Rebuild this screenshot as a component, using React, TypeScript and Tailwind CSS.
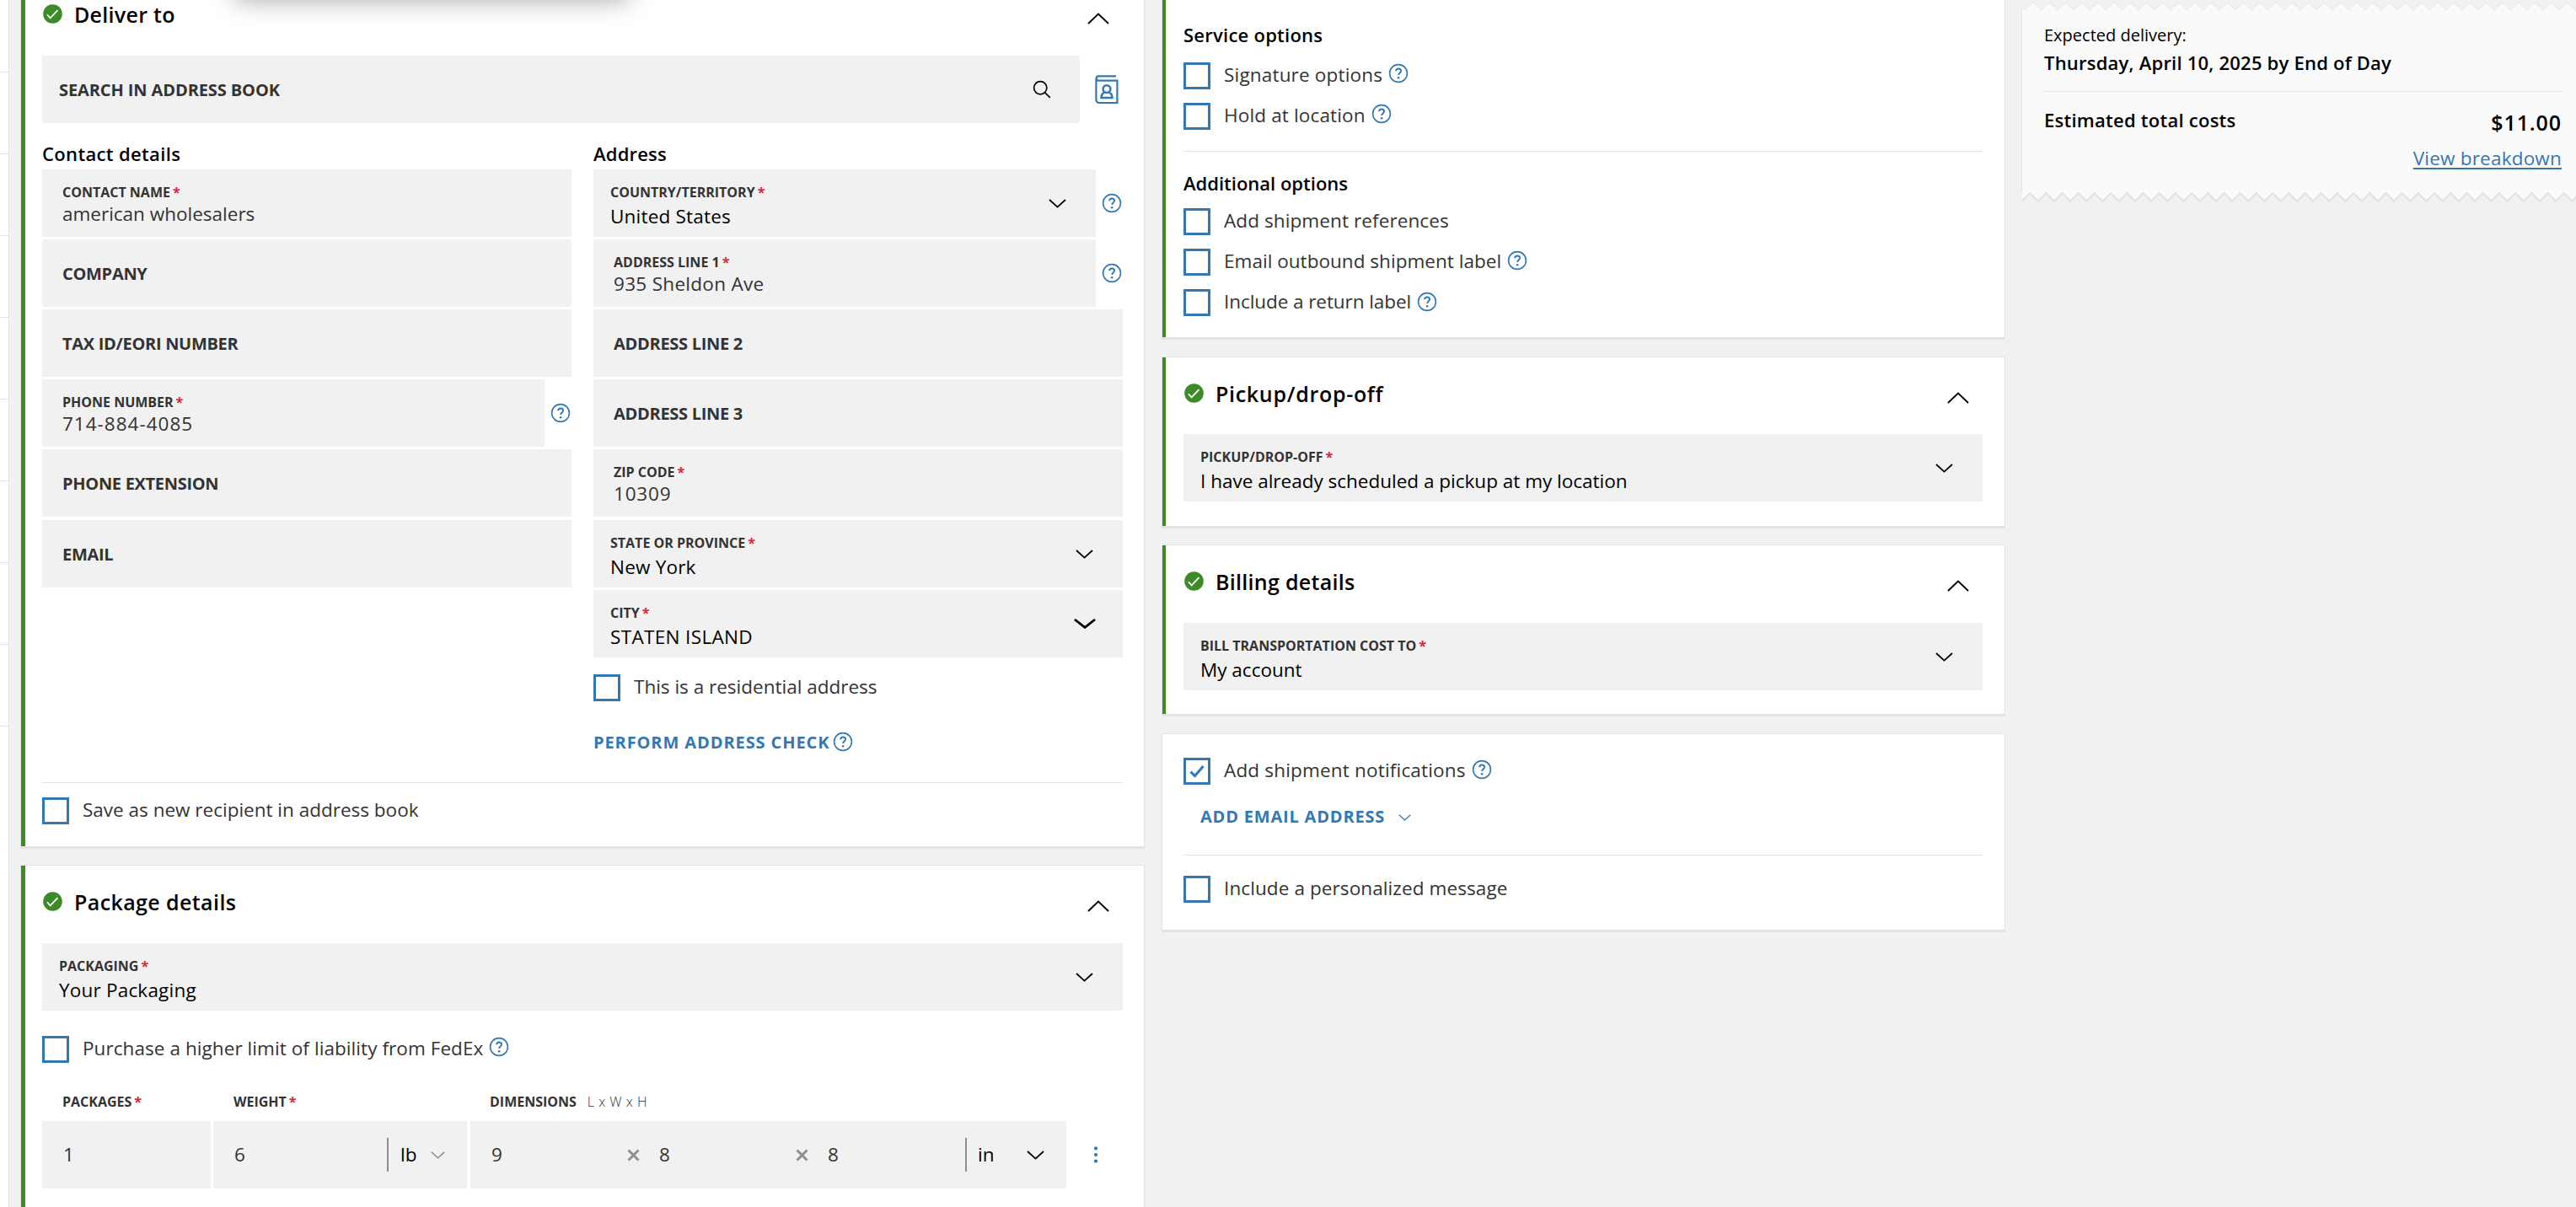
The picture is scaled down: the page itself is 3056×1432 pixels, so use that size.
import type { ReactNode } from "react";
import clsx from "clsx";

const stripRows = [0, 1, 2, 3, 4, 5, 6, 7];

function HelpIcon({ className }: { className?: string }) {
  return (
    <svg viewBox="0 0 24 24" className={clsx("size-6 shrink-0", className)} fill="none" stroke="#3278b4">
      <circle cx="12" cy="12" r="10.4" strokeWidth="1.6" />
      <path d="M9.1 9.3c.1-1.8 1.3-2.8 3-2.8s3 1 3 2.6c0 2.4-2.9 2.5-2.9 5" strokeWidth="1.9" />
      <circle cx="12.1" cy="17.2" r="1.3" fill="#3278b4" stroke="none" />
    </svg>
  );
}

function CheckCircle() {
  return (
    <svg viewBox="0 0 23 23" className="ml-px mt-[31px] size-[23px] shrink-0">
      <circle cx="11.5" cy="11.5" r="11.3" fill="#3d8b26" />
      <path d="M4.9 12.2l3.7 4.2 8.9-9.2" fill="none" stroke="#fff" strokeWidth="1.7" />
    </svg>
  );
}

function ChevronDown({ className }: { className: string }) {
  return (
    <svg viewBox="0 0 21 11" className={clsx("shrink-0", className)} fill="none" stroke="currentColor">
      <path d="M1 1l9.5 8.6L20 1" strokeWidth="1.8" />
    </svg>
  );
}

function Required() {
  return <span className="ml-[3px] text-[#d5273c]">*</span>;
}

type CardProps = { complete?: boolean; wide?: boolean; className?: string; children: ReactNode };

function Card({ complete = true, wide, className, children }: CardProps) {
  return (
    <section className={clsx("flex border border-b-[3px] border-[#e3e3e3] bg-white", className)}>
      {complete && <div className={clsx("shrink-0 bg-[#3d8b26]", wide ? "w-[5px]" : "w-1")} />}
      <div
        className={clsx(
          "min-w-0 flex-1",
          wide ? "pr-[25px] pl-5" : "pr-[26px]",
          !wide && (complete ? "pl-[21px]" : "pl-[25px]"),
        )}
      >
        {children}
      </div>
    </section>
  );
}

type CardHeaderProps = { title: string; titleClass?: string; className?: string };

function CardHeader({ title, titleClass = "tracking-[0.4px]", className = "h-[92px]" }: CardHeaderProps) {
  return (
    <header className={clsx("flex items-start", className)}>
      <CheckCircle />
      <h2 className={clsx("ml-3.5 mt-[27px] text-[25px] leading-8 font-semibold text-black", titleClass)}>{title}</h2>
      <svg viewBox="0 0 26 14" className="mt-[41px] mr-4 ml-auto h-[14px] w-[26px]" fill="none" stroke="#000">
        <path d="M1 13L13 1.6 25 13" strokeWidth="1.9" />
      </svg>
    </header>
  );
}

type FieldProps = {
  label: string;
  value?: string;
  valueClass?: string;
  required?: boolean;
  help?: boolean;
  select?: boolean;
  bold?: boolean;
  className?: string;
};

function Field({ label, value, valueClass = "tracking-[0px]", required, help, select, bold, className }: FieldProps) {
  return (
    <div className={clsx("flex items-center", className)}>
      <div className={clsx("flex h-20 flex-1 items-center bg-[#f1f1f1]", select ? "pl-5" : "pl-6")}>
        {value ? (
          <div className="flex-1 self-start pt-[17px]">
            <p className="text-[16px] leading-5 font-bold text-[#333]">
              {label}
              {required && <Required />}
            </p>
            <p
              className={clsx(
                "text-[22.5px] leading-[30px] font-[450]",
                select ? "mt-1 text-black" : "mt-px text-[#333]",
                valueClass,
              )}
            >
              {value}
            </p>
          </div>
        ) : (
          <p className="pt-0.5 text-[20px] leading-6 font-bold tracking-[-0.3px] text-[#333]">{label}</p>
        )}
        {select && !bold && <ChevronDown className="mr-[35px] h-[11px] w-[21px]" />}
        {select && bold && (
          <svg viewBox="0 0 26 12" className="mr-8 h-3 w-[26px]" fill="none" stroke="#000">
            <path d="M1 1l12 9.4L25 1" strokeWidth="2.8" />
          </svg>
        )}
      </div>
      {help && <HelpIcon className="mr-px ml-[7px]" />}
    </div>
  );
}

type CheckProps = {
  label: string;
  labelClass?: string;
  help?: boolean;
  helpClass?: string;
  checked?: boolean;
  className?: string;
};

function Check({ label, labelClass = "tracking-[0.1px]", help, helpClass = "mt-px", checked, className }: CheckProps) {
  return (
    <label className={clsx("flex h-8 items-start", className)}>
      <span className="flex size-8 shrink-0 items-center justify-center border-[3px] border-[#3278b4] bg-white">
        {checked && (
          <svg viewBox="0 0 18 16" className="h-4 w-[18px]" fill="none" stroke="#3278b4">
            <path d="M1.5 8.6l5 5L16.5 2" strokeWidth="3" />
          </svg>
        )}
      </span>
      <span className={clsx("ml-4 text-[22.5px] leading-[29px] font-[450] text-[#333]", labelClass)}>{label}</span>
      {help && <HelpIcon className={clsx("ml-[7px]", helpClass)} />}
    </label>
  );
}

function Divider({ className }: { className?: string }) {
  return <div className={clsx("h-px bg-[#e3e3e3]", className)} />;
}

function SubHeading({ children, className }: { children: ReactNode; className?: string }) {
  return <h3 className={clsx("text-[22px] leading-[30px] font-semibold text-black", className)}>{children}</h3>;
}

function Times() {
  return (
    <svg viewBox="0 0 15 15" className="mr-[22px] size-[15px] shrink-0" fill="none" stroke="#8e8e8e">
      <path d="M1.5 1.5l12 12M13.5 1.5l-12 12" strokeWidth="3" />
    </svg>
  );
}

function DeliverTo() {
  return (
    <Card wide>
      <CardHeader title="Deliver to" titleClass="tracking-[0.3px]" />
      <div className="flex items-center">
        <div className="flex h-20 w-[1231px] items-center justify-between bg-[#f1f1f1] pl-5">
          <p className="pt-0.5 text-[20px] leading-6 font-bold tracking-[-0.1px] text-[#333]">SEARCH IN ADDRESS BOOK</p>
          <svg viewBox="0 0 22 22" className="mr-[34px] size-[22px]" fill="none" stroke="#000">
            <circle cx="9.2" cy="9.2" r="7.6" strokeWidth="1.7" />
            <path d="M14.6 14.8l6.2 6" strokeWidth="1.7" />
          </svg>
        </div>
        <svg viewBox="0 0 28 35" className="ml-[18px] h-[35px] w-7" fill="none" stroke="#3278b4">
          <path d="M25 1.4H4.2a2.6 2.6 0 0 0 0 5.2H26.4V33H4.8a3.4 3.4 0 0 1-3.4-3.4V4" strokeWidth="2.2" />
          <circle cx="14" cy="16.6" r="4.4" strokeWidth="2.5" />
          <path d="M11.3 20.6c-2.6 1-3.8 3.1-3.8 6.4h13c0-3.3-1.2-5.4-3.8-6.4" strokeWidth="2.5" />
        </svg>
      </div>
      <div className="flex gap-[26px]">
        <div className="w-[628px]">
          <SubHeading className="h-[55px] pt-[21px] tracking-[0.35px]">Contact details</SubHeading>
          <div className="flex flex-col gap-[3px]">
            <Field label="CONTACT NAME" value="american wholesalers" required />
            <Field label="COMPANY" />
            <Field label="TAX ID/EORI NUMBER" />
            <Field label="PHONE NUMBER" value="714-884-4085" required help valueClass="tracking-[1px]" />
            <Field label="PHONE EXTENSION" />
            <Field label="EMAIL" className="mt-px" />
          </div>
        </div>
        <div className="w-[628px]">
          <SubHeading className="h-[55px] pt-[21px] tracking-[0.2px]">Address</SubHeading>
          <div className="flex flex-col gap-[3px]">
            <Field label="COUNTRY/TERRITORY" value="United States" required select help valueClass="tracking-[0.2px]" />
            <Field label="ADDRESS LINE 1" value="935 Sheldon Ave" required help valueClass="tracking-[0.3px]" />
            <Field label="ADDRESS LINE 2" />
            <Field label="ADDRESS LINE 3" />
            <Field label="ZIP CODE" value="10309" required valueClass="tracking-[0.8px]" />
            <Field
              label="STATE OR PROVINCE"
              value="New York"
              required
              select
              className="mt-px"
              valueClass="tracking-[0.2px]"
            />
            <Field label="CITY" value="STATEN ISLAND" required select bold valueClass="tracking-[0.35px]" />
          </div>
          <Check label="This is a residential address" labelClass="tracking-[0px]" className="mt-5" />
          <div className="mt-9 flex h-6 items-center">
            <span className="pt-0.5 text-[20px] leading-6 font-bold tracking-[0.9px] text-[#3278b4]">
              PERFORM ADDRESS CHECK
            </span>
            <HelpIcon className="ml-1" />
          </div>
        </div>
      </div>
      <Divider className="mt-9" />
      <Check
        label="Save as new recipient in address book"
        labelClass="tracking-[0px]"
        className="mt-[17px] mb-[26px]"
      />
    </Card>
  );
}

function PackageDetails() {
  return (
    <Card wide className="mt-[19px]">
      <CardHeader title="Package details" />
      <Field label="PACKAGING" value="Your Packaging" required select valueClass="tracking-[0.2px]" />
      <Check
        label="Purchase a higher limit of liability from FedEx"
        labelClass="tracking-[0.07px]"
        help
        className="mt-[30px]"
      />
      <div className="mt-9 flex text-[16px] leading-5 font-bold text-[#333]">
        <p className="w-[203px] pl-6">
          PACKAGES
          <Required />
        </p>
        <p className="w-[305px] pl-6">
          WEIGHT
          <Required />
        </p>
        <p className="pl-[23px]">DIMENSIONS</p>
        <p className="ml-[13px] font-light tracking-[0.5px]">L x W x H</p>
      </div>
      <div className="mt-[13px] mb-10 flex h-20 items-center text-[22.5px] leading-[30px] font-[450] text-[#333]">
        <div className="mr-[3px] flex h-20 w-[200px] items-center bg-[#f1f1f1] pl-[25px]">1</div>
        <div className="mr-1 flex h-20 w-[301px] items-center bg-[#f1f1f1] pl-[25px]">
          <span className="w-[181px]">6</span>
          <span className="h-10 w-0.5 bg-[#8e8e8e]" />
          <span className="ml-3.5 w-[36px] text-black">lb</span>
          <ChevronDown className="h-[9px] w-[17px] text-[#8e8e8e]" />
        </div>
        <div className="flex h-20 w-[707px] items-center bg-[#f1f1f1] pl-[25px]">
          <span className="w-[161px]">9</span>
          <Times />
          <span className="w-[163px] pl-px">8</span>
          <Times />
          <span className="w-[164px] pl-px">8</span>
          <span className="h-10 w-0.5 bg-[#8e8e8e]" />
          <span className="ml-[13px] w-[58px] text-black">in</span>
          <ChevronDown className="h-[11px] w-[21px] text-black" />
        </div>
        <svg viewBox="0 0 6 20" className="ml-8 h-5 w-1.5" fill="#3278b4">
          <circle cx="3" cy="2.4" r="2.1" />
          <circle cx="3" cy="10" r="2.1" />
          <circle cx="3" cy="17.6" r="2.1" />
        </svg>
      </div>
    </Card>
  );
}

function Options() {
  return (
    <Card>
      <SubHeading className="pt-[52px] tracking-[0.25px]">Service options</SubHeading>
      <div className="mt-[18px] flex flex-col gap-4">
        <Check label="Signature options" labelClass="tracking-[0.18px]" help />
        <Check label="Hold at location" labelClass="tracking-[0.15px]" help />
      </div>
      <Divider className="mt-[25px]" />
      <SubHeading className="mt-[22px]">Additional options</SubHeading>
      <div className="mt-[15px] mb-[25px] flex flex-col gap-4">
        <Check label="Add shipment references" />
        <Check label="Email outbound shipment label" labelClass="tracking-[0.03px]" help helpClass="mt-0.5" />
        <Check label="Include a return label" labelClass="tracking-[-0.07px]" help helpClass="mt-[3px]" />
      </div>
    </Card>
  );
}

function Summary() {
  const width = 658;
  const step = 19.2;
  const count = 36;
  const top = ["0.5,8", "4.4,12"];
  const bottom = ["0.5,11"];
  for (let i = 0; i < count; i++) {
    top.push(`${14 + i * step},3`, `${23.6 + i * step},12`);
    bottom.push(`${10.1 + i * step},1`, `${19.7 + i * step},11`);
  }
  const seams = Array.from({ length: count }, (_, i) => i * step);

  return (
    <aside className="ml-[19px] w-[658px] text-black">
      <svg viewBox={`0 0 ${width} 22`} className="block h-[22px] w-[658px]" fill="none">
        <polygon points={`0.5,22 ${top.join(" ")} 700,22`} fill="#fafafa" />
        <polyline points={`0.5,22 ${top.join(" ")}`} stroke="#e6e6e6" strokeWidth="1" />
        {seams.map((x) => (
          <path key={x} d={`M${33.2 + x} 12v10`} stroke="#f5f5f5" />
        ))}
      </svg>
      <div className="h-[206px] border-l border-[#e3e3e3] bg-[#fafafa] pt-1.5 pr-[17px] pl-[26px]">
        <p className="text-[20px] leading-7 font-[450]">Expected delivery:</p>
        <p className="mt-[3px] text-[22px] leading-[30px] font-semibold tracking-[0.22px]">
          Thursday, April 10, 2025 by End of Day
        </p>
        <Divider className="mt-[19px]" />
        <div className="mt-[18px] flex items-start justify-between">
          <p className="text-[22px] leading-[30px] font-semibold tracking-[0.25px]">Estimated total costs</p>
          <p className="mt-0.5 text-[25px] leading-8 font-semibold tracking-[0.9px]">$11.00</p>
        </div>
        <p className="mt-3 text-right text-[22.5px] leading-[30px] font-[450]">
          <a className="tracking-[0.2px] text-[#3278b4] underline decoration-2 underline-offset-[3px]">View breakdown</a>
        </p>
      </div>
      <svg viewBox={`0 0 ${width} 14`} className="block h-3.5 w-[658px]" fill="none">
        <polygon points={`0.5,0 ${bottom.join(" ")} 720,0`} fill="#fafafa" />
        <polyline points={bottom.join(" ")} stroke="#e3e3e3" strokeWidth="2.2" />
      </svg>
    </aside>
  );
}

export default function App() {
  return (
    <main className="relative flex h-[1432px] w-[3056px] items-start overflow-hidden bg-[#f1f1f1] font-['Open_Sans','Noto_Sans',sans-serif]">
      <div className="mr-[13px] h-full w-[11px] border-r border-[#e3e3e3] bg-white">
        <div className="h-[86px] border-b border-[#e3e3e3]" />
        {stripRows.map((row) => (
          <div key={row} className="h-[97px] border-b border-[#e3e3e3]" />
        ))}
      </div>

      <div className="-mt-[27px] w-[1334px]">
        <DeliverTo />
        <PackageDetails />
      </div>

      <div className="-mt-[27px] ml-5 w-[1001px]">
        <Options />
        <Card className="mt-5">
          <CardHeader title="Pickup/drop-off" titleClass="tracking-[0.7px]" className="h-[91px]" />
          <Field
            label="PICKUP/DROP-OFF"
            value="I have already scheduled a pickup at my location"
            required
            select
            className="mb-[29px]"
          />
        </Card>
        <Card className="mt-[19px]">
          <CardHeader title="Billing details" titleClass="tracking-[0.3px]" />
          <Field label="BILL TRANSPORTATION COST TO" value="My account" required select className="mb-7" />
        </Card>
        <Card complete={false} className="mt-5">
          <Check
            label="Add shipment notifications"
            labelClass="tracking-[0.18px]"
            help
            checked
            helpClass="mt-0.5"
            className="mt-7"
          />
          <div className="mt-[25px] flex h-6 items-center pl-5 text-[#3278b4]">
            <span className="pt-0.5 text-[20px] leading-6 font-bold tracking-[0.8px]">ADD EMAIL ADDRESS</span>
            <ChevronDown className="mt-1 ml-4 h-2 w-[15px]" />
          </div>
          <Divider className="mt-[34px]" />
          <Check label="Include a personalized message" className="mt-6 mb-8" />
        </Card>
      </div>

      <Summary />

      {/* shadow of the dropdown that ends above the fold */}
      <div className="absolute -top-[108px] left-[278px] h-[100px] w-[468px] rounded-lg bg-white shadow-[0_8px_30px_rgba(0,0,0,0.35)]" />
    </main>
  );
}
